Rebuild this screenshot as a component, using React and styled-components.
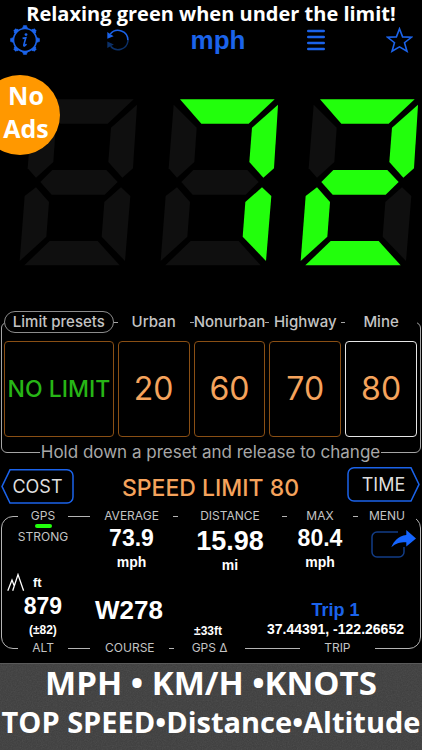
import React from "react";
import styled, { createGlobalStyle } from "styled-components";

const BLUE = "#1b63ea";
const ORANGE = "#f5a35c";
const GREEN = "#22ff0c";
const UI = 'Inter, "Liberation Sans", sans-serif';
const PROMO = '"Open Sans", "Noto Sans", sans-serif';

const GlobalStyle = createGlobalStyle`
  * { box-sizing: border-box; }
  body { margin: 0; background: #000; }
  h1, h2, p, dl, dd, dt { margin: 0; font-weight: inherit; }
  button { padding: 0; border: 0; background: none; font: inherit; color: inherit; cursor: pointer; }
  svg { display: block; }
`;

const Page = styled.main`
  position: relative;
  display: flex;
  flex-direction: column;
  min-height: 100vh;
  overflow: hidden;
  background: #000;
  color: #fff;
  font-family: ${UI};
`;

const Headline = styled.h1`
  font: 700 20px/27px ${PROMO};
  text-align: center;
  white-space: nowrap;
`;

const Toolbar = styled.nav`
  display: flex;
  align-items: center;
  justify-content: space-between;
  height: 26px;
  padding: 0 9px 0 10px;
  color: ${BLUE};
`;

const ToolButton = styled.button`
  display: flex;
  align-items: center;
`;

const InfoButton = styled(ToolButton)`
  padding-right: 6px;
`;

const UnitButton = styled(ToolButton)`
  font: 700 26px/30px "Liberation Sans", sans-serif;
`;

const Badge = styled.p`
  position: absolute;
  top: 75px;
  left: -20px;
  width: 80px;
  height: 80px;
  padding: 4px 0 0 12px;
  border-radius: 50%;
  background: #ff9800;
  font: 700 25px/33px ${PROMO};
  text-align: center;
`;

const Speed = styled.div`
  display: flex;
  margin-top: 46px;
  svg { flex: 1 1 0; min-width: 0; }
`;

const Presets = styled.section`
  margin: 56px 1px 0;
  border: 1px solid #a5a5a5;
  border-radius: 6px;
  padding: 0 3px 0 2px;
`;

const PresetGrid = styled.div`
  display: grid;
  grid-template-columns: 110fr 72fr 72fr 72fr 72fr;
  column-gap: 4px;
`;

const PresetLabels = styled(PresetGrid)`
  margin-top: -12px;
`;

const PresetLabel = styled.span`
  display: flex;
  justify-content: center;
  min-width: 0;
  background: #000;
  color: #c4c4c4;
  font-size: 15px;
  font-weight: 500;
  line-height: 22px;
  white-space: nowrap;
`;

const PresetTitle = styled(PresetLabel)`
  border: 1px solid #8c8c8c;
  border-radius: 11px;
  line-height: 20px;
`;

const PresetCells = styled(PresetGrid)`
  margin-top: 8px;
`;

const Preset = styled.button`
  display: flex;
  align-items: center;
  justify-content: center;
  min-width: 0;
  height: 96px;
  border: 1px solid ${(p) => (p.$active ? "#e6e6e6" : "#8a4f14")};
  border-radius: 4px;
  color: ${(p) => (p.$free ? "#27b516" : ORANGE)};
  font-size: ${(p) => (p.$free ? 23 : 32)}px;
  font-weight: ${(p) => (p.$free ? 500 : 400)};
  white-space: nowrap;
`;

const PresetHint = styled.p`
  width: fit-content;
  margin: 4px auto -11px;
  padding: 0 1px;
  background: #000;
  color: #a8a8a8;
  font-size: 17px;
  line-height: 22px;
  white-space: nowrap;
`;

const LimitBar = styled.div`
  display: flex;
  justify-content: space-between;
  height: 37px;
  margin-top: 14px;
  padding: 0 2px 0 1px;
`;

const TagButton = styled.button`
  position: relative;
  align-self: ${(p) => (p.$right ? "flex-start" : "flex-end")};
  width: 73px;
  height: 35px;
  color: #dedede;
  font-size: 18px;
  svg { position: absolute; inset: 0; }
`;

const Limit = styled.h2`
  align-self: center;
  padding-top: 5px;
  color: ${ORANGE};
  font-size: 23px;
  font-weight: 500;
  line-height: 30px;
  white-space: nowrap;
`;

const Stats = styled.section`
  margin: 12px 1px 0;
  border: 1px solid #b4b4b4;
  border-radius: 12px;
`;

const Row = styled.div`
  display: flex;
  height: ${(p) => p.$h}px;
  padding: 0 4px 0 16px;
`;

const LabelRow = styled(Row)`
  margin: ${(p) => (p.$bottom ? "0 0 -8px" : "-9px 0 0")};
  padding-right: ${(p) => (p.$bottom ? 45 : 4)}px;
`;

const Label = styled.span`
  flex: ${(p) => p.$w} 1 0;
  margin-left: ${(p) => p.$gap || 0}px;
  background: #000;
  color: #c4c4c4;
  font-size: 12px;
  line-height: 16px;
  text-align: center;
  white-space: nowrap;
`;

const Cell = styled.div`
  display: flex;
  flex: ${(p) => p.$w} 1 0;
  flex-direction: column;
  align-items: ${(p) => (p.$end ? "flex-end" : "center")};
  min-width: 0;
  margin-left: ${(p) => p.$gap || 0}px;
  padding-top: ${(p) => p.$top || 0}px;
  white-space: nowrap;
`;

const Value = styled.strong`
  font: 700 ${(p) => p.$size || 23}px/28px "Liberation Sans", sans-serif;
`;

const Unit = styled.span`
  font: 700 ${(p) => p.$size || 14}px/20px "Liberation Sans", sans-serif;
`;

const SignalBar = styled.i`
  width: 17px;
  height: 4px;
  border-radius: 2px;
  background: ${GREEN};
`;

const Signal = styled.span`
  padding-top: 1px;
  color: #c4c4c4;
  font-size: 12px;
  line-height: 16px;
`;

const AltUnit = styled.div`
  display: flex;
  align-items: center;
  align-self: flex-start;
  gap: 8px;
  margin-left: -11px;
  height: 18px;
`;

const Trip = styled.button`
  color: ${BLUE};
  font: 700 18px/18px "Liberation Sans", sans-serif;
`;

const Footer = styled.footer`
  position: relative;
  flex: 1;
  margin-top: 14px;
  border-top: 1px solid #5a5a5a;
  background: #3d3d3d;
  font-family: ${PROMO};
  font-weight: 700;
  text-align: center;
  white-space: nowrap;
`;

const Grain = styled.svg`
  position: absolute;
  inset: 0;
  width: 100%;
  height: 100%;
  opacity: 0.12;
`;

const FooterLine = styled.p`
  position: relative;
  display: flex;
  justify-content: center;
  font-size: ${(p) => p.$size}px;
  line-height: ${(p) => p.$line}px;
`;

const SEGMENTS = {
  a: "116,30 400,30 322,103 180,103",
  b: "410,46 398,237 366,265 324,218 332,115",
  c: "362,294 390,320 374,515 304,442 312,338",
  d: "72,528 358,528 292,455 148,455",
  e: "107,294 146,338 138,442 58,515 73,320",
  f: "97,46 166,115 159,218 107,265 82,237",
  g: "120,278 156,242 318,242 352,278 313,316 154,316",
};

function Digit({ on }) {
  return (
    <svg viewBox="-1 29 422 500" aria-hidden="true">
      {Object.entries(SEGMENTS).map(([key, points]) => (
        <polygon key={key} points={points} fill={on.includes(key) ? GREEN : "#0f0f0f"} />
      ))}
    </svg>
  );
}

function GearInfo() {
  return (
    <svg width="30" height="30" viewBox="0 0 30 30" fill="none" stroke="currentColor">
      <circle cx="15" cy="15" r="11.5" strokeWidth="1.6" />
      {[0, 45, 90, 135, 180, 225, 270, 315].map((a) => (
        <path key={a} d="M12.4 2.6h5.2M13.2 1.2h3.6" strokeWidth="1.9" transform={`rotate(${a} 15 15)`} />
      ))}
      <circle cx="16" cy="9.6" r="1.4" fill="currentColor" stroke="none" />
      <path d="M12.6 13.4l3.2-.7-2 7.2q-.2 1.4 1 .8l1.7-1.5" strokeWidth="1.6" />
    </svg>
  );
}

function Refresh() {
  return (
    <svg width="22" height="26" viewBox="0 0 22 26" fill="none" strokeWidth="1.5">
      <path d="M3.3 7A10 10 0 0 1 21 13.4" stroke="currentColor" />
      <path d="M.3 5v6.7l6.3-2.5z" fill="currentColor" />
      <path d="M21 14a10 10 0 0 1-17.4 5.2" stroke="#0b3069" />
      <path d="M.3 21v-6.6l6.500 3z" fill="#0b3069" />
    </svg>
  );
}

function Lines() {
  return (
    <svg width="18" height="22" viewBox="0 0 18 22" stroke="currentColor" strokeWidth="2.4" strokeLinecap="round">
      <path d="M1.200 2h15.600M1.200 8h15.600M1.200 14h15.600M1.200 20h15.600" />
    </svg>
  );
}

function Star() {
  return (
    <svg width="27" height="26" viewBox="0 0 27 26" fill="none" stroke="currentColor" strokeWidth="1.6">
      <path d="M13.500 1.800l3.100 8.100 8.800.4-6.900 5.400 2.500 8.500-7.500-4.300L6 24.200l2.500-8.500-6.900-5.400 8.800-.4z" />
    </svg>
  );
}

function Tag({ right, children }) {
  return (
    <TagButton $right={right}>
      <svg width="73" height="35" viewBox="0 0 73 35" fill="none" stroke={BLUE} strokeWidth="1.5">
        <path
          transform={right ? "matrix(-1 0 0 1 73 0)" : undefined}
          d="M9 .8H66a6 6 0 0 1 6 6V28a6 6 0 0 1-6 6H9L1 17.4z"
        />
      </svg>
      {children}
    </TagButton>
  );
}

function Mountains() {
  return (
    <svg width="18" height="19" viewBox="0 0 18 19" fill="none" stroke="#fff" strokeWidth="1.3">
      <path d="M.8 17.8L5 7l2.400 6.200M5.700 17.800L11 1.600l5.600 16.200" />
    </svg>
  );
}

function Share() {
  return (
    <svg width="45" height="30" viewBox="0 0 45 30">
      <path d="M27 3H6a5 5 0 0 0-5 5v15a5 5 0 0 0 5 5h22a5 5 0 0 0 5-5v-5" fill="none" stroke="#123c86" strokeWidth="1.5" />
      <path d="M45 9.500L35.300 1v5C27 7 23 12 20.300 18.300 25 14.300 29 13.200 35.300 13.300V17.500z" fill="#1565ff" />
    </svg>
  );
}

export default function App() {
  return (
    <>
      <GlobalStyle />
      <Page>
        <Headline>Relaxing green when under the limit!</Headline>
        <Toolbar>
          <InfoButton aria-label="Information"><GearInfo /></InfoButton>
          <ToolButton aria-label="Reset"><Refresh /></ToolButton>
          <UnitButton>mph</UnitButton>
          <ToolButton aria-label="List"><Lines /></ToolButton>
          <ToolButton aria-label="Favourites"><Star /></ToolButton>
        </Toolbar>
        <Speed role="img" aria-label="72">
          <Digit on="" />
          <Digit on="abc" />
          <Digit on="abged" />
        </Speed>
        <Badge>No<br />Ads</Badge>

        <Presets>
          <PresetLabels>
            <PresetTitle>Limit presets</PresetTitle>
            <PresetLabel id="urban">Urban</PresetLabel>
            <PresetLabel id="nonurban">Nonurban</PresetLabel>
            <PresetLabel id="highway">Highway</PresetLabel>
            <PresetLabel id="mine">Mine</PresetLabel>
          </PresetLabels>
          <PresetCells>
            <Preset $free>NO LIMIT</Preset>
            <Preset aria-describedby="urban">20</Preset>
            <Preset aria-describedby="nonurban">60</Preset>
            <Preset aria-describedby="highway">70</Preset>
            <Preset aria-describedby="mine" $active>80</Preset>
          </PresetCells>
          <PresetHint>Hold down a preset and release to change</PresetHint>
        </Presets>

        <LimitBar>
          <Tag>COST</Tag>
          <Limit>SPEED LIMIT 80</Limit>
          <Tag right>TIME</Tag>
        </LimitBar>

        <Stats>
          <LabelRow $h={16}>
            <Label $w={50}>GPS</Label>
            <Label $w={83} $gap={22}>AVERAGE</Label>
            <Label $w={104} $gap={5}>DISTANCE</Label>
            <Label $w={66} $gap={5}>MAX</Label>
            <Label $w={58} $gap={5}>MENU</Label>
          </LabelRow>
          <Row $h={49}>
            <Cell $w={50}>
              <SignalBar />
              <Signal>STRONG</Signal>
            </Cell>
            <Cell $w={83} $gap={22}>
              <Value>73.9</Value>
              <Unit>mph</Unit>
            </Cell>
            <Cell $w={104} $gap={5} $top={3}>
              <Value $size={27}>15.98</Value>
              <Unit>mi</Unit>
            </Cell>
            <Cell $w={66} $gap={5}>
              <Value>80.4</Value>
              <Unit>mph</Unit>
            </Cell>
            <Cell $w={58} $gap={5} $top={5} $end>
              <ToolButton aria-label="Menu"><Share /></ToolButton>
            </Cell>
          </Row>
          <Row $h={67}>
            <Cell $w={50} $top={1}>
              <AltUnit><Mountains /><Unit $size={13}>ft</Unit></AltUnit>
              <Value>879</Value>
              <Unit $size={12}>(±82)</Unit>
            </Cell>
            <Cell $w={79} $gap={22} $top={23}>
              <Value $size={26}>W278</Value>
            </Cell>
            <Cell $w={70} $gap={5} $top={48}>
              <Unit $size={12}>±33ft</Unit>
            </Cell>
            <Cell $w={162} $gap={12} $top={28}>
              <Trip>Trip 1</Trip>
              <Unit>37.44391, -122.26652</Unit>
            </Cell>
          </Row>
          <LabelRow $h={16} $bottom>
            <Label $w={50}>ALT</Label>
            <Label $w={79} $gap={22}>COURSE</Label>
            <Label $w={70} $gap={5}>GPS Δ</Label>
            <Label $w={75} $gap={55}>TRIP</Label>
          </LabelRow>
        </Stats>

        <Footer>
          <Grain aria-hidden="true">
            <filter id="grain">
              <feTurbulence type="fractalNoise" baseFrequency="0.8" numOctaves="2" />
              <feColorMatrix type="saturate" values="0" />
            </filter>
            <rect width="100%" height="100%" filter="url(#grain)" />
          </Grain>
          <FooterLine $size={33} $line={38}>MPH • KM/H •KNOTS</FooterLine>
          <FooterLine $size={29} $line={40}>TOP SPEED•Distance•Altitude</FooterLine>
        </Footer>
      </Page>
    </>
  );
}
